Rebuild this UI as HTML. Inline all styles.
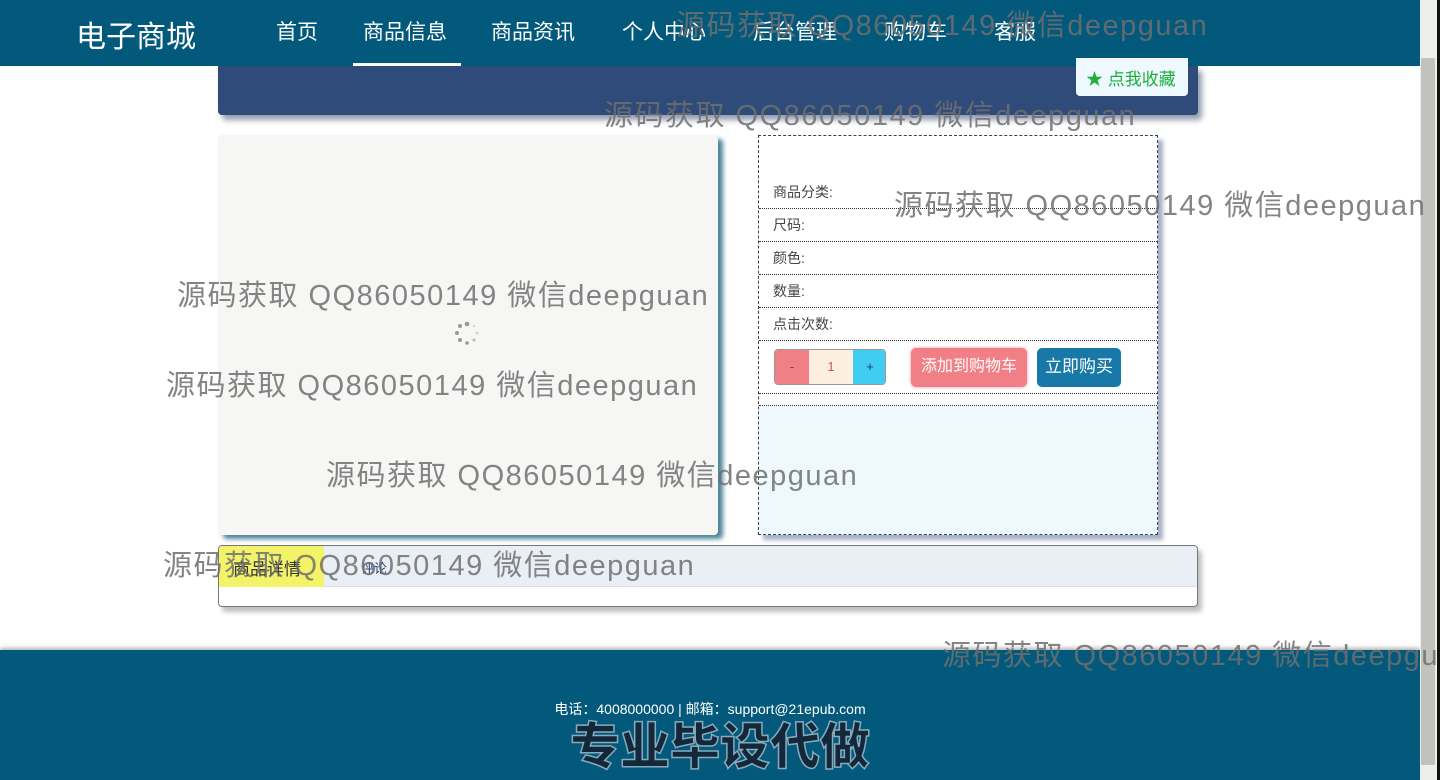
<!DOCTYPE html>
<html><head><meta charset="utf-8"><style>
*{margin:0;padding:0;box-sizing:border-box}
body{width:1440px;height:780px;overflow:hidden;background:#fff;font-family:"Liberation Sans","Noto Sans CJK SC",sans-serif;position:relative}
.a{position:absolute}
.nav{left:0;top:0;width:1420px;height:66px;background:#03597b}
.nav span{position:absolute;top:16px;font-size:21px;color:#fff}
.wm{position:absolute;font-size:29px;color:rgba(110,110,110,.85);white-space:nowrap;font-family:"Liberation Sans","Noto Sans CJK SC",sans-serif;letter-spacing:1.5px}
.row{position:absolute;left:0;width:398px;border-bottom:1px dotted #333;font-size:14px;color:#444;padding-left:14px}
</style></head><body>
<div class="a nav">
<span style="left:76px;top:12px;font-size:30px">电子商城</span>
<span style="left:276px">首页</span>
<span style="left:363px">商品信息</span>
<span style="left:491px">商品资讯</span>
<span style="left:622px">个人中心</span>
<span style="left:753px">后台管理</span>
<span style="left:884px">购物车</span>
<span style="left:994px">客服</span>
<div class="a" style="left:353px;top:63px;width:108px;height:3px;background:#fff"></div>
</div>
<div class="a" style="left:218px;top:66px;width:980px;height:49px;background:#2f4b79;border-radius:0 0 4px 4px;box-shadow:4px 5px 6px rgba(40,60,100,.5)"></div>
<div class="a" style="left:1076px;top:58px;width:112px;height:38px;background:#eefaff;border-radius:0 0 4px 4px;color:#1fae3a;font-size:17px;padding:7px 0 0 10px">★ 点我收藏</div>

<div class="a" style="left:218px;top:135px;width:500px;height:400px;background:#f6f6f4;border-radius:4px;box-shadow:5px 4px 5px rgba(3,80,110,.7)"></div>
<svg class="a" style="left:452px;top:318px" width="36" height="36"><g fill="#999"><circle cx="15" cy="6" r="2.3"/><circle cx="8" cy="8" r="2"/><circle cx="5" cy="15" r="2"/><circle cx="8" cy="22" r="2"/><circle cx="15" cy="25" r="1.8"/><circle cx="22" cy="22" r="1.5" fill="#bbb"/><circle cx="25" cy="15" r="1.3" fill="#ccc"/><circle cx="22" cy="8" r="1.1" fill="#ccc"/></g></svg>

<div class="a" style="left:758px;top:135px;width:400px;height:400px;border:1px dashed #345;background:#fff;box-shadow:5px 5px 4px rgba(60,80,130,.45)">
<div class="a" style="left:0;top:270px;width:398px;height:128px;background:#eef8fd"></div>
<div class="row" style="top:46px;height:27px">商品分类:</div>
<div class="row" style="top:73px;height:33px;padding-top:6px">尺码:</div>
<div class="row" style="top:106px;height:33px;padding-top:6px">颜色:</div>
<div class="row" style="top:139px;height:33px;padding-top:6px">数量:</div>
<div class="row" style="top:172px;height:33px;padding-top:6px">点击次数:</div>
<div class="row" style="top:205px;height:53px"></div>
<div class="row" style="top:258px;height:12px"></div>
<div class="a" style="left:15px;top:213px;width:112px;height:36px;border:1px solid #999;border-radius:4px;overflow:hidden;font-size:13px">
<div class="a" style="left:0;top:0;width:34px;height:36px;background:#f17f86;color:#a33;text-align:center;line-height:34px">-</div>
<div class="a" style="left:34px;top:0;width:44px;height:36px;background:#fdefe0;color:#c55;text-align:center;line-height:34px">1</div>
<div class="a" style="left:78px;top:0;width:34px;height:36px;background:#3fcdf4;color:#246;text-align:center;line-height:34px">+</div>
</div>
<div class="a" style="left:152px;top:212px;width:116px;height:39px;background:#f17f86;border-radius:5px;color:#fff;font-size:16px;text-align:center;line-height:38px;box-shadow:0 0 3px #f8a">添加到购物车</div>
<div class="a" style="left:278px;top:212px;width:84px;height:39px;background:#1878a8;border-radius:5px;color:#fff;font-size:17px;text-align:center;line-height:38px">立即购买</div>
</div>

<div class="a" style="left:218px;top:545px;width:980px;height:62px;border:1px solid #777;border-radius:4px;overflow:hidden;box-shadow:4px 5px 5px rgba(0,0,0,.25)">
<div class="a" style="left:0;top:0;width:980px;height:41px;background:#e9eff5;border-bottom:1px solid #dde"></div>
<div class="a" style="left:0;top:0;width:105px;height:41px;background:#f3f36a;font-size:17px;color:#333;padding:9px 0 0 14px">商品详情</div>
<div class="a" style="left:142px;top:12px;font-size:13px;color:#247">评论</div>
</div>

<div class="a" style="left:0;top:650px;width:1420px;height:130px;background:#03597b;box-shadow:0 -2px 4px rgba(0,0,0,.3)"></div>
<div class="a" style="left:0;top:699px;width:1420px;text-align:center;color:#fff;font-size:14px;padding-left:0">电话：4008000000 | 邮箱：support@21epub.com</div>
<div class="a" style="left:0;top:707px;width:1440px;text-align:center;font-size:50px;font-weight:900;color:#13283a;-webkit-text-stroke:1.5px #8ab;font-family:'Noto Sans CJK SC',sans-serif">专业毕设代做</div>

<div class="a" style="left:1420px;top:0;width:17px;height:780px;background:#eeeeec"></div>
<div class="a" style="left:1421px;top:58px;width:14px;height:707px;background:#c1c1bd"></div>
<div class="a" style="left:1437px;top:0;width:3px;height:780px;background:#111"></div>

<div class="wm" style="left:676px;top:2px">源码获取 QQ86050149 微信deepguan</div>
<div class="wm" style="left:604px;top:92px">源码获取 QQ86050149 微信deepguan</div>
<div class="wm" style="left:894px;top:182px">源码获取 QQ86050149 微信deepguan</div>
<div class="wm" style="left:177px;top:272px">源码获取 QQ86050149 微信deepguan</div>
<div class="wm" style="left:166px;top:362px">源码获取 QQ86050149 微信deepguan</div>
<div class="wm" style="left:326px;top:452px">源码获取 QQ86050149 微信deepguan</div>
<div class="wm" style="left:163px;top:542px">源码获取 QQ86050149 微信deepguan</div>
<div class="wm" style="left:942px;top:632px">源码获取 QQ86050149 微信deepguan</div>
</body></html>
